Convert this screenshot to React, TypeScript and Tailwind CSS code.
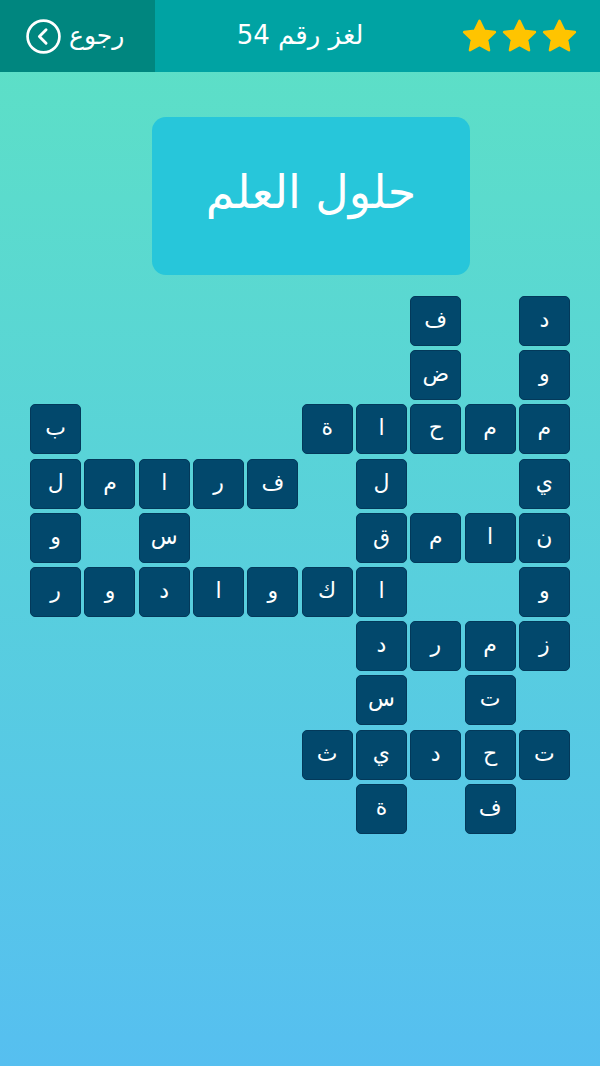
import React from "react";

const cells: [number, number, string][] = [
  [0, 7, "ف"], [0, 9, "د"],
  [1, 7, "ض"], [1, 9, "و"],
  [2, 0, "ب"], [2, 5, "ة"], [2, 6, "ا"], [2, 7, "ح"], [2, 8, "م"], [2, 9, "م"],
  [3, 0, "ل"], [3, 1, "م"], [3, 2, "ا"], [3, 3, "ر"], [3, 4, "ف"], [3, 6, "ل"], [3, 9, "ي"],
  [4, 0, "و"], [4, 2, "س"], [4, 6, "ق"], [4, 7, "م"], [4, 8, "ا"], [4, 9, "ن"],
  [5, 0, "ر"], [5, 1, "و"], [5, 2, "د"], [5, 3, "ا"], [5, 4, "و"], [5, 5, "ك"], [5, 6, "ا"], [5, 9, "و"],
  [6, 6, "د"], [6, 7, "ر"], [6, 8, "م"], [6, 9, "ز"],
  [7, 6, "س"], [7, 8, "ت"],
  [8, 5, "ث"], [8, 6, "ي"], [8, 7, "د"], [8, 8, "ح"], [8, 9, "ت"],
  [9, 6, "ة"], [9, 8, "ف"],
];

function Star() {
  return (
    <svg width="37" height="37" viewBox="0 0 24 24">
      <path
        d="M12 1.8l3.05 6.4 6.95.9-5.1 4.85 1.3 6.95L12 17.5l-6.2 3.4 1.3-6.95L2 9.1l6.95-.9z"
        fill="#ffc400"
        stroke="#ffc400"
        strokeWidth="1.6"
        strokeLinejoin="round"
      />
    </svg>
  );
}

export default function App() {
  const font = { fontFamily: '"DejaVu Sans", "Noto Sans", sans-serif' };
  return (
    <div
      className="w-[600px] h-[1066px] bg-gradient-to-b from-[#5de1c4] to-[#56bff0] flex flex-col"
      style={font}
    >
      <div className="h-[72px] flex bg-[#00a3a3]">
        <div className="w-[155px] bg-[#00867f] flex items-center pl-[25px] gap-[7px]">
          <svg width="37" height="37" viewBox="0 0 36 36">
            <circle cx="18" cy="18" r="15.5" fill="none" stroke="white" strokeWidth="2.6" />
            <path d="M20.5 11.5L14 18l6.5 6.5" fill="none" stroke="white" strokeWidth="2.8" strokeLinecap="round" strokeLinejoin="round" />
          </svg>
          <span dir="rtl" className="text-white text-[25px] leading-none pb-[2px]">رجوع</span>
        </div>
        <div className="flex-1 flex items-center">
          <div dir="rtl" className="w-[290px] text-center text-white text-[26px] leading-none pb-[3px]">
            لغز رقم 54
          </div>
          <div className="flex gap-[3px] ml-[16px]">
            <Star />
            <Star />
            <Star />
          </div>
        </div>
      </div>

      <div className="flex mt-[45px] pl-[152px]">
        <div className="w-[318px] h-[158px] rounded-[14px] bg-[#27c6da] flex items-center justify-center">
          <span dir="rtl" className="text-white text-[46px] leading-none pb-[8px]">حلول العلم</span>
        </div>
      </div>

      <div className="flex justify-center mt-[21px]">
        <div className="grid grid-cols-[repeat(10,51px)] grid-rows-[repeat(10,50px)] gap-x-[3.3px] gap-y-[4.2px]">
          {cells.map(([r, c, ch], i) => (
            <div
              key={i}
              className="rounded-[5px] bg-[#02486c] border border-[#03395a] flex items-center justify-center text-white text-[22px] leading-none"
              style={{ gridRow: r + 1, gridColumn: c + 1 }}
            >
              <span className="pb-[2px]">{ch}</span>
            </div>
          ))}
        </div>
      </div>
    </div>
  );
}
